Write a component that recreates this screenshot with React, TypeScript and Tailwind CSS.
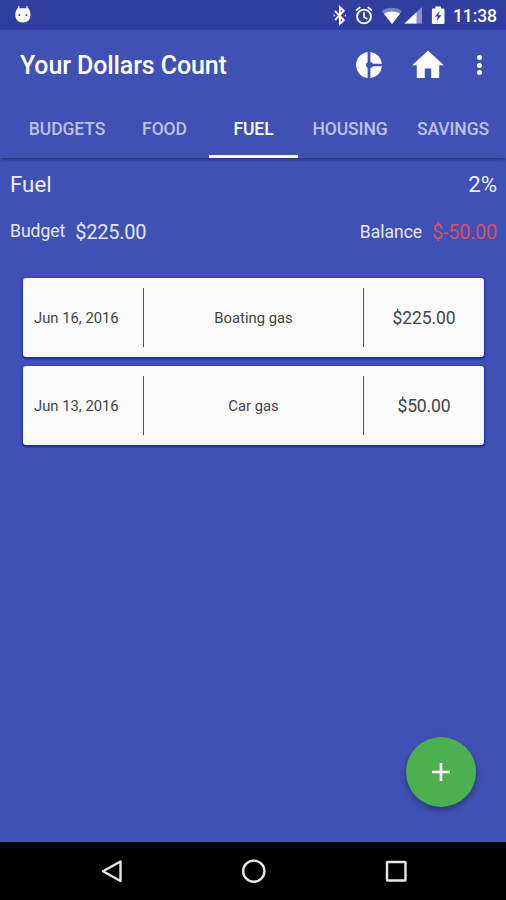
import clsx from "clsx"

const tabs = [
  { name: "BUDGETS", width: "w-[106px]" },
  { name: "FOOD", width: "w-[89px]" },
  { name: "FUEL", width: "w-[89px]" },
  { name: "HOUSING", width: "w-[104px]" },
  { name: "SAVINGS", width: "w-[102px]" },
]

const expenses = [
  { date: "Jun 16, 2016", title: "Boating gas", amount: "$225.00" },
  { date: "Jun 13, 2016", title: "Car gas", amount: "$50.00" },
]

function StatusBar() {
  return (
    <div className="flex h-[30px] shrink-0 items-center bg-[#303f9f] text-white">
      <svg className="ml-[14px] h-[20px] w-[18px]" viewBox="0 0 18 20">
        <path d="M4.800 1v3M13 1v3" stroke="white" strokeWidth="1.200" />
        <path
          d="M3.500 3.200h11c1.200 2 2 4 2 6.600c0 4.800-2.800 7.700-7.500 7.700S1.300 14.600 1.300 9.800c0-2.600.9-4.600 2.200-6.600z"
          fill="white"
        />
        <circle cx="5.400" cy="10" r="1" fill="#303f9f" />
        <circle cx="12.400" cy="10" r="1" fill="#303f9f" />
      </svg>
      <svg className="ml-auto h-[30px] w-[130px]" viewBox="322 0 130 30">
        {/* bluetooth */}
        <path
          d="M335 11l8.800 9.200-3.900 3.600V7.200l3.900 3.600-8.800 9.200"
          fill="none"
          stroke="white"
          strokeWidth="1.900"
        />
        <path d="M333.500 14.200l1.800 1.300-1.800 1.300zM346 14.200l-1.500 1.300 1.500 1.300z" fill="white" />
        {/* alarm */}
        <circle cx="364" cy="16.500" r="6.900" fill="none" stroke="white" strokeWidth="1.900" />
        <path
          d="M364 12.300v4.800l3.400 2M356 10.600l4.300-3.600M372 10.600l-4.300-3.600"
          fill="none"
          stroke="white"
          strokeWidth="1.700"
        />
        {/* wifi */}
        <path d="M381.500 11.200c6-4.600 14.500-4.600 20.500 0L392 23.800z" fill="#7782c0" />
        <path d="M384 13.800c4.800-3 11.200-3 16 0L392 24z" fill="white" />
        {/* cell signal */}
        <path d="M422 7v16.500h-17.500z" fill="#8790c8" />
        <path d="M416.500 12.200v11.300h-12z" fill="white" />
        {/* battery */}
        <path
          d="M435.300 6.500h5.700v2h2.300c.7 0 1.200.5 1.200 1.200v13.100c0 .7-.5 1.200-1.200 1.200h-10.200c-.7 0-1.200-.5-1.200-1.200V9.700c0-.7.5-1.200 1.200-1.200h2.200z"
          fill="white"
        />
        <path d="M439.700 10.800l-4.700 5.600h2.800l-1.200 4.800 4.800-6h-2.900z" fill="#303f9f" />
      </svg>
      <span className="w-[54px] pt-[2px] pl-[1px] text-[17.500px] leading-[30px] font-medium tracking-[-0.1px] whitespace-nowrap">
        11:38
      </span>
    </div>
  )
}

function Toolbar() {
  return (
    <div className="flex h-[70px] shrink-0 items-center">
      <h1 className="ml-5 pt-[2px] text-[25px] leading-[30px] font-medium tracking-[-0.12px] text-white">
        Your Dollars Count
      </h1>
      <svg className="ml-auto h-[28px] w-[28px]" viewBox="0 0 28 28">
        <path d="M12.600 1v10.300a3 3 0 0 0 0 5.400V27A13.100 13.100 0 0 1 12.600 1z" fill="white" />
        <path d="M15.400 1A13.100 13.100 0 0 1 27 12.800h-9a3 3 0 0 0-2.600-1.700z" fill="white" />
        <path d="M15.400 27A13.100 13.100 0 0 0 27 15.200h-9a3 3 0 0 1-2.600 1.700z" fill="white" />
      </svg>
      <svg className="ml-[29px] h-[30px] w-[32px]" viewBox="0 0 32 30">
        <path d="M16 .5L.2 15.200h4.600V28h8V18.600h6.400V28h8V15.200h4.600z" fill="white" />
      </svg>
      <div className="mr-[24px] ml-[33px] flex flex-col gap-[2.500px]">
        <span className="h-[5px] w-[5px] rounded-full bg-white" />
        <span className="h-[5px] w-[5px] rounded-full bg-white" />
        <span className="h-[5px] w-[5px] rounded-full bg-white" />
      </div>
    </div>
  )
}

function Tabs() {
  return (
    <div className="flex h-[58px] shrink-0 pl-[14px] shadow-[0_3px_3px_-1px_rgba(0,0,0,0.350)]">
      {tabs.map((tab) => (
        <div
          key={tab.name}
          className={clsx(
            "flex shrink-0 items-center justify-center border-b-[3px] pt-[3px] text-[17.500px] leading-[20px] font-medium tracking-[-0.1px]",
            tab.width,
            tab.name === "FUEL" ? "border-white text-white" : "border-transparent text-[#bcc2e6]"
          )}
        >
          {tab.name}
        </div>
      ))}
    </div>
  )
}

function NavBar() {
  return (
    <div className="h-[58px] shrink-0 bg-black">
      <svg className="h-[58px] w-[506px]" viewBox="0 842 506 58" fill="none" stroke="#e6e6e6" strokeWidth="2.400">
        <path d="M120.500 861.500v19.500l-17.500-9.700z" strokeLinejoin="round" />
        <circle cx="253.800" cy="871.200" r="10.600" />
        <rect x="387" y="862" width="18.500" height="18.500" rx="0.500" />
      </svg>
    </div>
  )
}

export default function App() {
  return (
    <div className="relative flex h-[900px] w-[506px] flex-col overflow-hidden bg-[#3f51b5] font-['Roboto',sans-serif]">
      <StatusBar />
      <Toolbar />
      <Tabs />

      <main className="flex-1">
        <div className="flex justify-between pt-[12px] pr-[9px] pl-[10px] text-[22.300px] leading-[28px] text-[#eceefa]">
          <span>Fuel</span>
          <span>2%</span>
        </div>
        <div className="flex items-center pt-[21px] pr-[9px] pl-[10px] leading-[26px] text-[#e4e7f7]">
          <span className="-mt-[3px] text-[17.500px]">Budget</span>
          <span className="ml-[10px] text-[20px] tracking-[-0.25px]">$225.00</span>
          <span className="ml-auto text-[17.500px]">Balance</span>
          <span className="ml-[10px] text-[20px] tracking-[-0.3px] text-[#d9505f]">$-50.00</span>
        </div>

        <div className="mt-[33px] mr-[22px] ml-[23px] flex flex-col gap-[9px]">
          {expenses.map((expense) => (
            <div
              key={expense.date}
              className="flex h-[79px] items-center rounded-[3px] bg-[#fafafa] text-[14.800px] text-[#444444] shadow-[0_1px_2px_1px_#1b2a9c]"
            >
              <div className="w-[120px] pt-[2px] pl-[11px]">{expense.date}</div>
              <div className="flex h-[59px] w-[221px] items-center justify-center border-x border-[#555555] pt-[2px]">
                {expense.title}
              </div>
              <div className="flex-1 pt-[2px] text-center text-[17.500px] tracking-[-0.1px]">{expense.amount}</div>
            </div>
          ))}
        </div>
      </main>

      <NavBar />

      {/* Floating add button */}
      <button className="absolute top-[737px] left-[406px] flex h-[70px] w-[70px] items-center justify-center rounded-full bg-[#4caf50] shadow-[0_3px_6px_rgba(0,0,0,0.350)]">
        <svg className="h-[18px] w-[18px]" viewBox="0 0 18 18">
          <path d="M9 0v18M0 9h18" stroke="white" strokeWidth="2.600" />
        </svg>
      </button>
    </div>
  )
}
